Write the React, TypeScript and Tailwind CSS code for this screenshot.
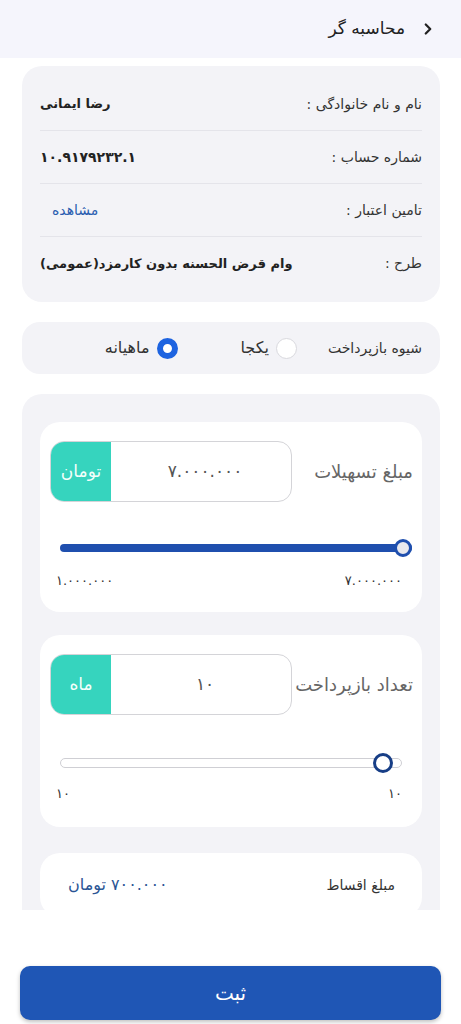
import { ChevronRight } from 'lucide-react';

const font = { fontFamily: '"DejaVu Sans", "Noto Sans", sans-serif' };

const infoRows = [
  { label: 'نام و نام خانوادگی :', value: 'رضا ایمانی' },
  { label: 'شماره حساب :', value: '۱۰.۹۱۷۹۲۳۲.۱', num: true },
  { label: 'تامین اعتبار :', value: 'مشاهده', link: true },
  { label: 'طرح :', value: 'وام قرض الحسنه بدون کارمزد(عمومی)' },
];

function InputGroup({ value, unit }: { value: string; unit: string }) {
  return (
    <div className="flex h-[61px] w-[242px] overflow-hidden rounded-[14px] border border-[#d4d4d8] bg-white">
      <div className="flex flex-1 items-center justify-center pl-[8px] text-[17px] text-[#555]">{value}</div>
      <div className="flex w-[60px] items-center justify-center bg-[#36d4be] text-[17px] text-[#f4fffb]">
        {unit}
      </div>
    </div>
  );
}

export default function App() {
  return (
    <div dir="rtl" style={font} className="flex h-[1024px] w-[461px] flex-col overflow-hidden bg-white">
      {/* Header */}
      <div className="flex h-[58px] shrink-0 items-center gap-[14px] bg-[#f5f5fc] pr-[24px]">
        <ChevronRight size={18} strokeWidth={3} className="text-[#222]" />
        <span className="text-[17px] text-[#222]">محاسبه گر</span>
      </div>

      {/* Scroll area */}
      <div className="flex flex-1 flex-col gap-[20px] overflow-hidden pt-[8px] pr-[21px] pl-[22px]">
        {/* Info card */}
        <div className="rounded-[20px] bg-[#f3f3f7] px-[18px] py-[12px]">
          {infoRows.map((r, i) => (
            <div
              key={r.label}
              className={`flex h-[53px] items-center justify-between ${i < 3 ? 'border-b border-[#e4e4ea]' : ''}`}
            >
              <span className="text-[14px] text-[#333]">{r.label}</span>
              <span
                className={
                  r.link
                    ? 'pl-[12px] text-[14px] text-[#2a5db0]'
                    : r.num
                      ? 'text-[14px] font-bold text-[#222]'
                      : 'text-[13px] font-bold text-[#222]'
                }
              >
                {r.value}
              </span>
            </div>
          ))}
        </div>

        {/* Payment method */}
        <div className="flex h-[52px] shrink-0 items-center rounded-[18px] bg-[#f3f3f7] pr-[18px]">
          <span className="text-[14px] text-[#333]">شیوه بازپرداخت</span>
          <div className="mr-[31px] flex items-center gap-[7px]">
            <span className="h-[21px] w-[21px] rounded-full border border-[#d9d9de] bg-white" />
            <span className="text-[16px] text-[#333]">یکجا</span>
          </div>
          <div className="mr-[62px] flex items-center gap-[8px]">
            <span className="h-[21px] w-[21px] rounded-full border-[6px] border-[#1d63e0] bg-white" />
            <span className="text-[16px] text-[#333]">ماهیانه</span>
          </div>
        </div>

        {/* Calculator */}
        <div className="flex shrink-0 flex-col rounded-[20px] bg-[#f3f3f7] px-[18px] pt-[28px] pb-[20px]">
          {/* Amount */}
          <div className="rounded-[20px] bg-white pt-[19px] pb-[23px]">
            <div className="flex items-center justify-between pr-[9px] pl-[10px]">
              <span className="text-[18px] text-[#666]">مبلغ تسهیلات</span>
              <InputGroup value="۷.۰۰۰.۰۰۰" unit="تومان" />
            </div>
            <div className="relative mt-[37px] mr-[10px] ml-[20px] flex h-[18px] items-center">
              <div className="h-[8px] w-full rounded-full bg-[#1f4fae]" />
              <div className="absolute top-0 right-0 h-[18px] w-[18px] rounded-full border-[3px] border-[#1f4fae] bg-[#e9e9ee]" />
            </div>
            <div className="mt-[16px] mr-[20px] ml-[16px] flex justify-between text-[13px] leading-[16px] text-[#333]">
              <span>۷.۰۰۰.۰۰۰</span>
              <span>۱.۰۰۰.۰۰۰</span>
            </div>
          </div>

          {/* Count */}
          <div className="mt-[23px] rounded-[20px] bg-white pt-[19px] pb-[25px]">
            <div className="flex items-center justify-between pr-[9px] pl-[10px]">
              <span className="text-[18px] text-[#666]">تعداد بازپرداخت</span>
              <InputGroup value="۱۰" unit="ماه" />
            </div>
            <div className="relative mt-[38px] mr-[20px] ml-[20px] flex h-[20px] items-center">
              <div className="h-[10px] w-full rounded-full border border-[#cfcfd4] bg-white" />
              <div className="absolute top-0 right-[9px] h-[20px] w-[20px] rounded-full border-[3px] border-[#173e86] bg-white" />
            </div>
            <div className="mt-[13px] mr-[20px] ml-[16px] flex justify-between text-[13px] leading-[16px] text-[#333]">
              <span>۱۰</span>
              <span>۱۰</span>
            </div>
          </div>

          {/* Installment */}
          <div className="mt-[26px] flex h-[64px] items-center justify-between rounded-[20px] bg-white pr-[27px] pl-[28px]">
            <span className="text-[14px] text-[#333]">مبلغ اقساط</span>
            <span className="text-[16px] text-[#2a5494]">۷۰۰.۰۰۰ تومان</span>
          </div>
        </div>
      </div>

      {/* Footer */}
      <div className="flex h-[114px] shrink-0 items-start bg-white px-[20px] pt-[56px]">
        <button className="flex h-[54px] w-full items-center justify-center rounded-[10px] bg-[#1f56b5] text-[20px] text-white shadow-[0_2px_4px_rgba(0,0,0,0.25)]">
          ثبت
        </button>
      </div>
    </div>
  );
}
